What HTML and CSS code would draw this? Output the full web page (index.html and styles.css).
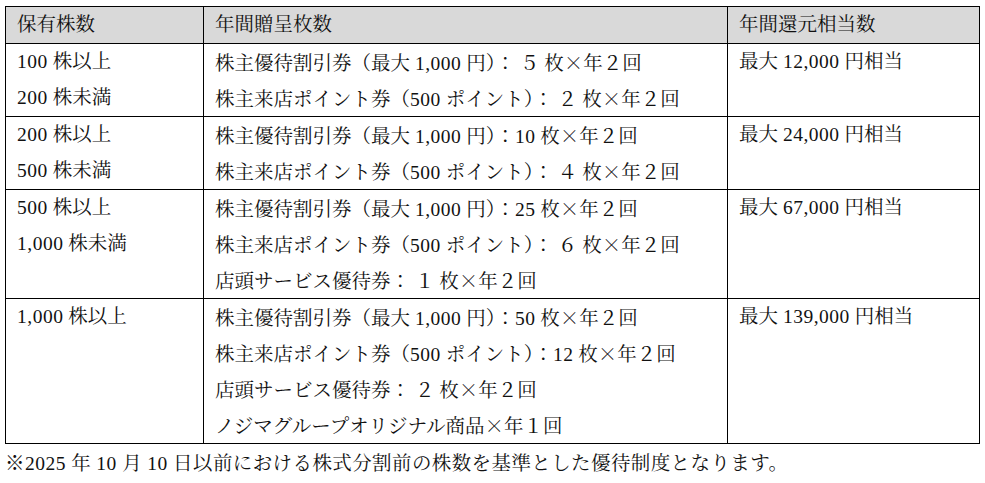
FILE: index.html
```html
<!DOCTYPE html>
<html lang="ja">
<head>
<meta charset="utf-8">
<link rel="stylesheet" href="styles.css">
</head>
<body>
<table class="benefits">
  <colgroup>
    <col class="c1"><col class="c2"><col class="c3">
  </colgroup>
  <thead>
    <tr><th><div class="ln">保有株数</div></th><th><div class="ln">年間贈呈枚数</div></th><th><div class="ln">年間還元相当数</div></th></tr>
  </thead>
  <tbody>
    <tr>
      <td><div class="ln"><span class="n">100</span> 株以上</div><div class="ln"><span class="n">200</span> 株未満</div></td>
      <td><div class="ln">株主優待割引券（最大 <span class="n">1,000</span> 円）： ５ 枚<span class="x">×</span>年２回</div><div class="ln">株主来店ポイント券（<span class="n">500</span> ポイント）： ２ 枚<span class="x">×</span>年２回</div></td>
      <td><div class="ln">最大 <span class="n">12,000</span> 円相当</div></td>
    </tr>
    <tr>
      <td><div class="ln"><span class="n">200</span> 株以上</div><div class="ln"><span class="n">500</span> 株未満</div></td>
      <td><div class="ln">株主優待割引券（最大 <span class="n">1,000</span> 円）：<span class="n">10</span> 枚<span class="x">×</span>年２回</div><div class="ln">株主来店ポイント券（<span class="n">500</span> ポイント）： ４ 枚<span class="x">×</span>年２回</div></td>
      <td><div class="ln">最大 <span class="n">24,000</span> 円相当</div></td>
    </tr>
    <tr>
      <td><div class="ln"><span class="n">500</span> 株以上</div><div class="ln"><span class="n">1,000</span> 株未満</div></td>
      <td><div class="ln">株主優待割引券（最大 <span class="n">1,000</span> 円）：<span class="n">25</span> 枚<span class="x">×</span>年２回</div><div class="ln">株主来店ポイント券（<span class="n">500</span> ポイント）： ６ 枚<span class="x">×</span>年２回</div><div class="ln">店頭サービス優待券： １ 枚<span class="x">×</span>年２回</div></td>
      <td><div class="ln">最大 <span class="n">67,000</span> 円相当</div></td>
    </tr>
    <tr>
      <td><div class="ln"><span class="n">1,000</span> 株以上</div></td>
      <td><div class="ln">株主優待割引券（最大 <span class="n">1,000</span> 円）：<span class="n">50</span> 枚<span class="x">×</span>年２回</div><div class="ln">株主来店ポイント券（<span class="n">500</span> ポイント）：<span class="n">12</span> 枚<span class="x">×</span>年２回</div><div class="ln">店頭サービス優待券： ２ 枚<span class="x">×</span>年２回</div><div class="ln">ノジマグループオリジナル商品<span class="x">×</span>年１回</div></td>
      <td><div class="ln">最大 <span class="n">139,000</span> 円相当</div></td>
    </tr>
  </tbody>
</table>
<div class="note ln">※<span class="n">2025</span> 年 <span class="n">10</span> 月 <span class="n">10</span> 日以前における株式分割前の株数を基準とした優待制度となります。</div>
</body>
</html>
```
FILE: styles.css
```css
html, body {
  margin: 0;
  padding: 0;
  background: #fff;
}
body {
  padding: 6px 7px 0 5px;
  font-family: "Liberation Serif", "Noto Serif CJK JP", "Noto Sans CJK JP", serif;
  font-size: 19.5px;
  color: #111;
}
.benefits {
  border-collapse: collapse;
  width: 974px;
  table-layout: fixed;
}
.benefits .c1 { width: 198px; }
.benefits .c2 { width: 524px; }
.benefits .c3 { width: 252px; }
.benefits th,
.benefits td {
  border: 1px solid #000;
  padding: 0 6px 0 11px;
  text-align: left;
  vertical-align: top;
  font-weight: normal;
  white-space: nowrap;
  overflow: hidden;
}
.benefits th {
  background: #d9d9d9;
}
.ln {
  height: 36px;
  line-height: 36px;
  overflow: visible;
  white-space: nowrap;
}
.n {
  letter-spacing: 0.5px;
}
.x {
  font-family: "Noto Serif CJK JP", "Noto Sans CJK JP", sans-serif;
}
.note {
  margin-top: 2px;
  letter-spacing: 0.4px;
}
```
